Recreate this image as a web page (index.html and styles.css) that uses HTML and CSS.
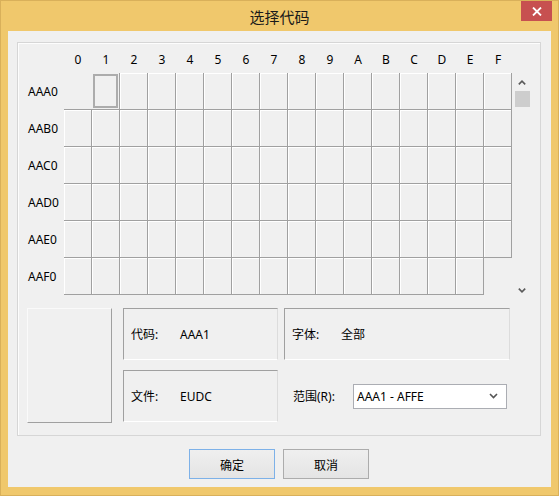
FILE: index.html
```html
<!DOCTYPE html>
<html lang="zh-CN">
<head>
<meta charset="utf-8">
<title>选择代码</title>
<link rel="stylesheet" href="styles.css">
</head>
<body>
<div class="window">
  <div class="titlebar">
    <span class="title">选择代码</span>
    <div class="close">
      <svg width="10" height="9" viewBox="0 0 10 9"><path d="M1 0.5 L9 8.5 M9 0.5 L1 8.5" stroke="#fff" stroke-width="1.8" fill="none"/></svg>
    </div>
  </div>
  <div class="client">
    <div class="groupbox">
      <div class="charmap">
        <div class="corner"></div>
        <div class="colhead">0</div><div class="colhead">1</div><div class="colhead">2</div><div class="colhead">3</div>
        <div class="colhead">4</div><div class="colhead">5</div><div class="colhead">6</div><div class="colhead">7</div>
        <div class="colhead">8</div><div class="colhead">9</div><div class="colhead">A</div><div class="colhead">B</div>
        <div class="colhead">C</div><div class="colhead">D</div><div class="colhead">E</div><div class="colhead">F</div>
        <div class="scrollbar">
          <div class="arrow"><svg width="8" height="5" viewBox="0 0 8 5"><path d="M0.8 4.4 L4 1.2 L7.2 4.4" stroke="#5a5a5a" stroke-width="1.6" fill="none"/></svg></div>
          <div class="thumb"></div>
          <div class="track"></div>
          <div class="arrow"><svg width="8" height="5" viewBox="0 0 8 5"><path d="M0.8 0.6 L4 3.8 L7.2 0.6" stroke="#5a5a5a" stroke-width="1.6" fill="none"/></svg></div>
        </div>

        <div class="rowlabel">AAA0</div>
        <div class="cell empty-top"></div>
        <div class="cell sel"><span class="sel-box"></span></div><div class="cell"></div><div class="cell"></div><div class="cell"></div>
        <div class="cell"></div><div class="cell"></div><div class="cell"></div><div class="cell"></div>
        <div class="cell"></div><div class="cell"></div><div class="cell"></div><div class="cell"></div>
        <div class="cell"></div><div class="cell"></div><div class="cell"></div>

        <div class="rowlabel">AAB0</div>
        <div class="cell"></div><div class="cell"></div><div class="cell"></div><div class="cell"></div>
        <div class="cell"></div><div class="cell"></div><div class="cell"></div><div class="cell"></div>
        <div class="cell"></div><div class="cell"></div><div class="cell"></div><div class="cell"></div>
        <div class="cell"></div><div class="cell"></div><div class="cell"></div><div class="cell"></div>

        <div class="rowlabel">AAC0</div>
        <div class="cell"></div><div class="cell"></div><div class="cell"></div><div class="cell"></div>
        <div class="cell"></div><div class="cell"></div><div class="cell"></div><div class="cell"></div>
        <div class="cell"></div><div class="cell"></div><div class="cell"></div><div class="cell"></div>
        <div class="cell"></div><div class="cell"></div><div class="cell"></div><div class="cell"></div>

        <div class="rowlabel">AAD0</div>
        <div class="cell"></div><div class="cell"></div><div class="cell"></div><div class="cell"></div>
        <div class="cell"></div><div class="cell"></div><div class="cell"></div><div class="cell"></div>
        <div class="cell"></div><div class="cell"></div><div class="cell"></div><div class="cell"></div>
        <div class="cell"></div><div class="cell"></div><div class="cell"></div><div class="cell"></div>

        <div class="rowlabel">AAE0</div>
        <div class="cell"></div><div class="cell"></div><div class="cell"></div><div class="cell"></div>
        <div class="cell"></div><div class="cell"></div><div class="cell"></div><div class="cell"></div>
        <div class="cell"></div><div class="cell"></div><div class="cell"></div><div class="cell"></div>
        <div class="cell"></div><div class="cell"></div><div class="cell"></div><div class="cell"></div>

        <div class="rowlabel">AAF0</div>
        <div class="cell"></div><div class="cell"></div><div class="cell"></div><div class="cell"></div>
        <div class="cell"></div><div class="cell"></div><div class="cell"></div><div class="cell"></div>
        <div class="cell"></div><div class="cell"></div><div class="cell"></div><div class="cell"></div>
        <div class="cell"></div><div class="cell"></div><div class="cell"></div><div class="cell none"></div>
      </div>

      <div class="details">
        <div class="preview"></div>
        <div class="col col-mid">
          <div class="infobox"><span class="lbl">代码:</span><span class="val">AAA1</span></div>
          <div class="infobox"><span class="lbl">文件:</span><span class="val">EUDC</span></div>
        </div>
        <div class="col col-right">
          <div class="infobox"><span class="lbl">字体:</span><span class="val">全部</span></div>
          <div class="rangerow">
            <span class="rlbl">范围(R):</span>
            <div class="select">
              <span>AAA1 - AFFE</span>
              <svg width="9" height="6" viewBox="0 0 9 6"><path d="M1 1 L4.5 4.5 L8 1" stroke="#555" stroke-width="1.6" fill="none"/></svg>
            </div>
          </div>
        </div>
      </div>
    </div>

    <div class="buttons">
      <div class="btn default">确定</div>
      <div class="btn">取消</div>
    </div>
  </div>
</div>
</body>
</html>
```

FILE: styles.css
```css
* { box-sizing: border-box; }

body {
  margin: 0;
  font-family: "Noto Sans", "Noto Sans CJK SC", sans-serif;
  font-size: 12px;
  color: #000;
}

.window {
  width: 559px;
  height: 496px;
  background: #f0c86c;
  border: 1px solid #d9b05a;
  padding: 0 7px 8px 7px;
  display: flex;
  flex-direction: column;
}

.titlebar {
  height: 30px;
  margin: 0 -7px;
  position: relative;
  display: flex;
  align-items: center;
  justify-content: center;
}

.title {
  font-family: "Noto Sans CJK SC", sans-serif;
  font-size: 15px;
  color: #1a1a1a;
  margin-top: 1px;
}

.close {
  position: absolute;
  top: 0;
  right: 6px;
  width: 31px;
  height: 20px;
  background: #c75050;
  display: flex;
  align-items: center;
  justify-content: center;
}

.client {
  flex: 1;
  background: #f0f0f0;
  padding: 11px 10px 0 9px;
  display: flex;
  flex-direction: column;
}

.groupbox {
  height: 394px;
  border: 1px solid #d6d6d6;
  box-shadow: inset 1px 1px 0 #fdfdfd;
}

.charmap {
  display: grid;
  grid-template-columns: 46px repeat(16, 28px) 19px;
  grid-template-rows: 30px repeat(6, 37px);
}

.corner { grid-column: 1; grid-row: 1; }

.colhead {
  display: flex;
  align-items: center;
  justify-content: center;
  padding-top: 2px;
}

.rowlabel {
  grid-column: 1;
  display: flex;
  align-items: center;
  padding-left: 10px;
}

.cell {
  border-right: 1px solid #a0a0a0;
  border-bottom: 1px solid #a0a0a0;
  box-shadow: inset 1px 1px 0 #ffffff;
  display: flex;
}

.cell.empty-top {
  border-right: none;
  box-shadow: none;
}

.cell.none {
  border: none;
  box-shadow: none;
}

.cell.sel { box-shadow: none; }

.sel-box {
  flex: 1;
  margin: 1px;
  border: 2px solid #acacac;
}

.scrollbar {
  grid-column: 18;
  grid-row: 2 / 8;
  align-self: start;
  height: 225px;
  margin-top: 1px;
  margin-bottom: -4px;
  display: flex;
  flex-direction: column;
  align-items: center;
}

.arrow {
  height: 17px;
  width: 100%;
  display: flex;
  align-items: center;
  justify-content: center;
  padding-left: 1px;
}

.thumb {
  width: 15px;
  height: 16px;
  margin-left: 2px;
  background: #cdcdcd;
}

.track { flex: 1; }

.details {
  display: flex;
  margin-top: 13px;
  padding-left: 9px;
}

.preview {
  width: 85px;
  height: 115px;
  border-top: 1px solid #fafafa;
  border-left: 1px solid #fafafa;
  border-right: 1px solid #a0a0a0;
  border-bottom: 1px solid #a0a0a0;
}

.col {
  display: flex;
  flex-direction: column;
  gap: 10px;
}

.col-mid {
  width: 155px;
  margin-left: 11px;
}

.col-right {
  width: 226px;
  margin-left: 6px;
}

.infobox {
  height: 52px;
  border-top: 1px solid #a0a0a0;
  border-left: 1px solid #a0a0a0;
  border-right: 1px solid #dcdcdc;
  border-bottom: 1px solid #ffffff;
  display: flex;
  align-items: center;
  padding-left: 7px;
}

.lbl {
  width: 49px;
}

.rangerow {
  height: 52px;
  display: flex;
  align-items: center;
  padding-left: 9px;
}

.rlbl { width: 60px; }

.select {
  width: 154px;
  height: 25px;
  background: #ffffff;
  border: 1px solid #abadb3;
  display: flex;
  align-items: center;
  justify-content: space-between;
  padding: 0 8px 0 3px;
}

.buttons {
  display: flex;
  justify-content: center;
  gap: 8px;
  margin-top: 13px;
}

.btn {
  width: 86px;
  height: 30px;
  border: 1px solid #acacac;
  background: linear-gradient(#efefef, #e4e4e4);
  display: flex;
  align-items: center;
  justify-content: center;
  font-family: "Noto Sans CJK SC", sans-serif;
}

.btn.default {
  border-color: #7db1e8;
}
```
